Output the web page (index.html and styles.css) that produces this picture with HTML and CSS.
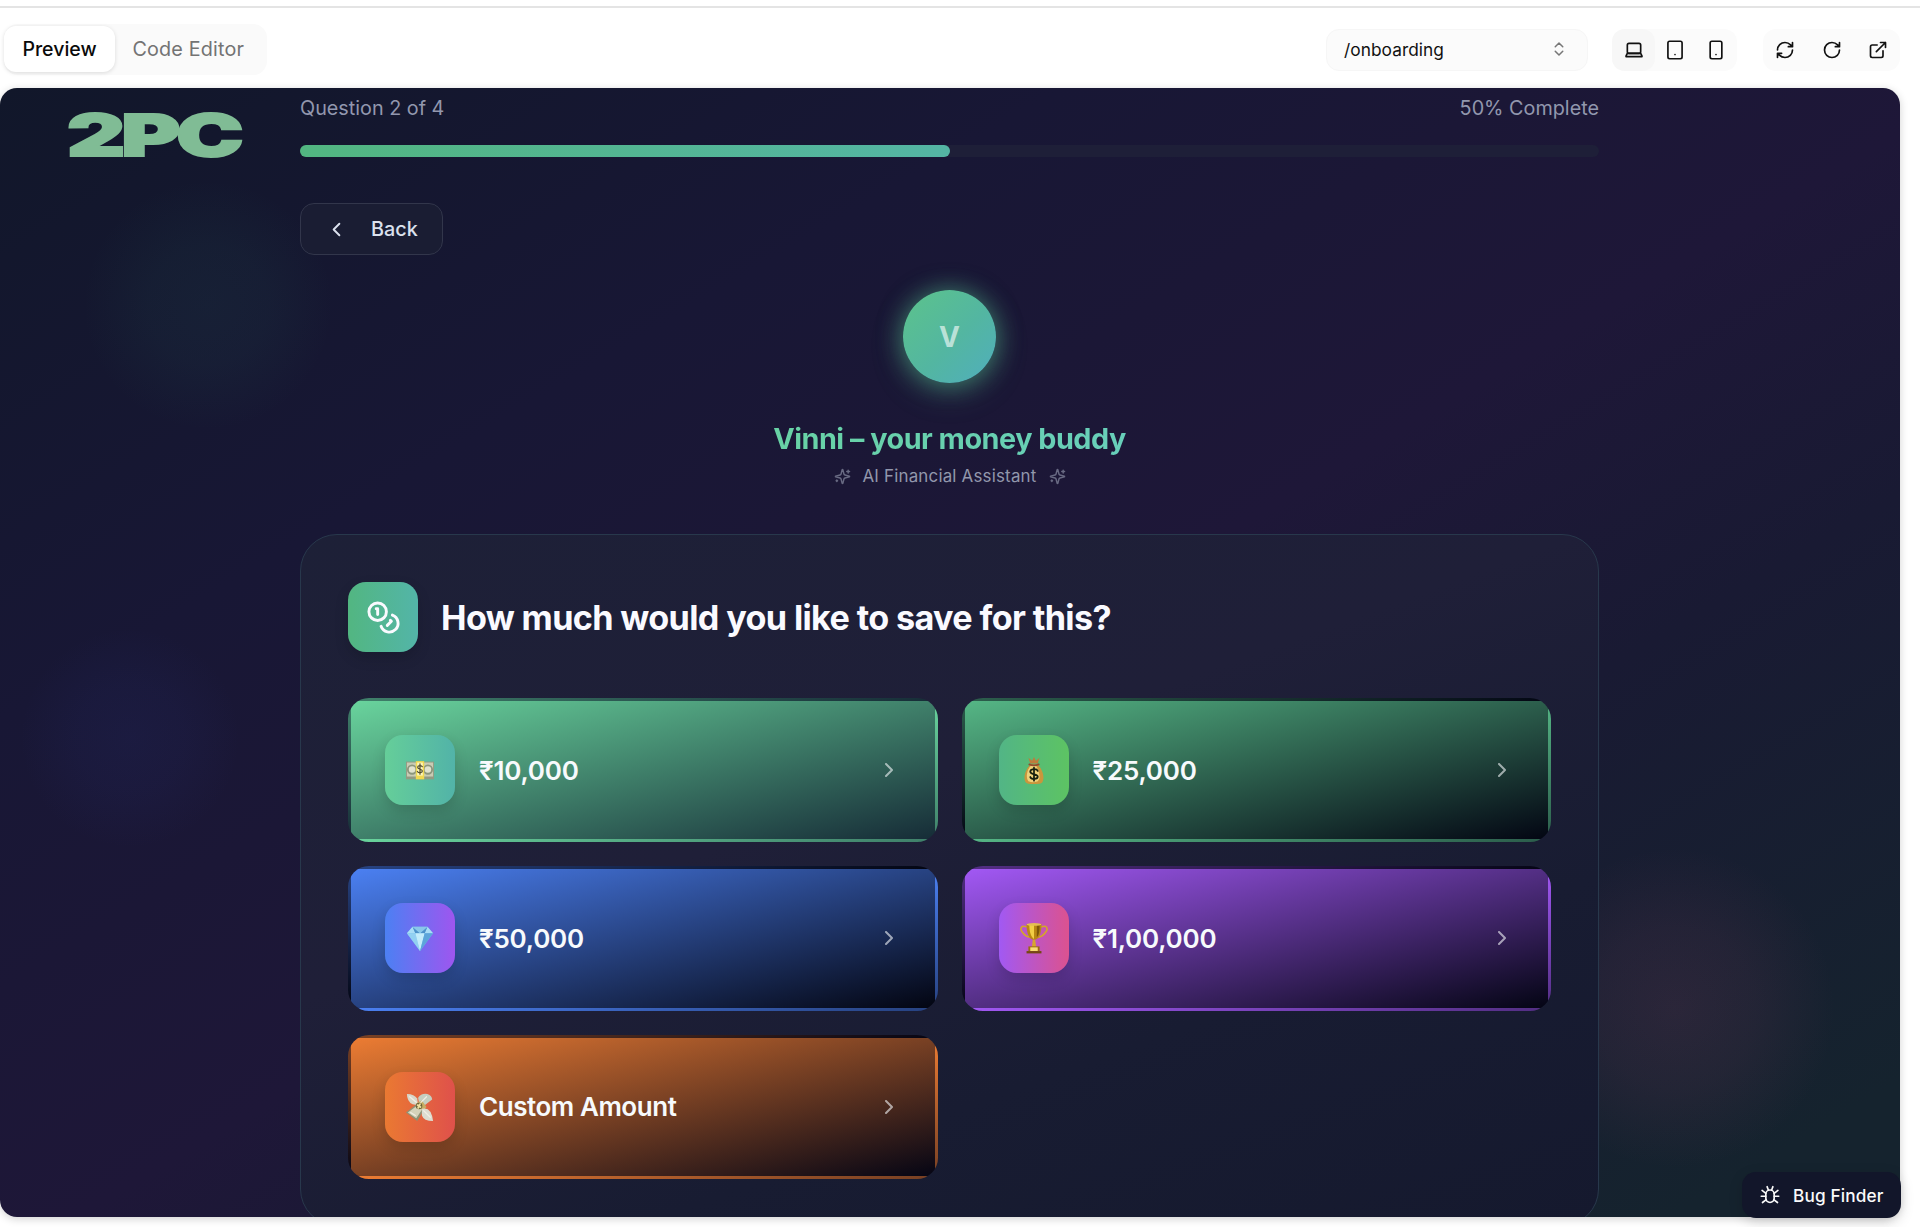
FILE: index.html
```html
<!DOCTYPE html>
<html lang="en">
<head>
<meta charset="utf-8">
<title>Onboarding preview</title>
<link rel="stylesheet" href="styles.css">
</head>
<body>
<svg class="defs" width="0" height="0">
  <symbol id="chev" viewBox="0 0 24 24"><path d="m9 18 6-6-6-6"/></symbol>
  <symbol id="spark" viewBox="0 0 24 24"><path d="M9.937 15.5A2 2 0 0 0 8.5 14.063l-6.135-1.582a.5.5 0 0 1 0-.962L8.5 9.936A2 2 0 0 0 9.937 8.5l1.582-6.135a.5.5 0 0 1 .963 0L14.063 8.5A2 2 0 0 0 15.5 9.937l6.135 1.581a.5.5 0 0 1 0 .964L15.5 14.063a2 2 0 0 0-1.437 1.437l-1.582 6.135a.5.5 0 0 1-.963 0z"/><path d="M20 3v4M22 5h-4M4 17v2M5 18H3"/></symbol>
</svg>
<header class="toolbar">
  <div class="tabs"><button class="tab active">Preview</button><button class="tab">Code Editor</button></div>
  <div class="tools">
    <div class="route"><span>/onboarding</span><svg viewBox="0 0 24 24"><path d="m7 15 5 5 5-5M7 9l5-5 5 5"/></svg></div>
    <div class="devices">
      <span class="device on"><svg viewBox="0 0 24 24"><rect x="4" y="4" width="16" height="12" rx="2"/><path d="M4 16l-1.500 3q-.4 1 .6 1h17.800q1 0 .6-1L20 16z"/></svg></span>
      <span class="device"><svg viewBox="0 0 24 24"><rect x="3.500" y="1.500" width="17" height="21" rx="2"/><path d="M12 17.500h.01"/></svg></span>
      <span class="device"><svg viewBox="0 0 24 24"><rect x="5" y="1.500" width="14" height="21" rx="2"/><path d="M12 17.500h.01"/></svg></span>
    </div>
    <div class="actions">
      <svg viewBox="0 0 24 24"><path d="M3 12a9 9 0 0 1 9-9 9.750 9.750 0 0 1 6.740 2.740L21 8M21 3v5h-5M21 12a9 9 0 0 1-9 9 9.750 9.750 0 0 1-6.740-2.740L3 16M8 16H3v5"/></svg>
      <svg viewBox="0 0 24 24"><path d="M21 12a9 9 0 1 1-9-9c2.520 0 4.930 1 6.740 2.740L21 8M21 3v5h-5"/></svg>
      <svg viewBox="0 0 24 24"><path d="M15 3h6v6M10 14 21 3M18 13v6a2 2 0 0 1-2 2H5a2 2 0 0 1-2-2V8a2 2 0 0 1 2-2h6"/></svg>
    </div>
  </div>
</header>
<main class="preview">
  <svg class="logo" viewBox="0 0 190 80"><text transform="translate(2 60) scale(1.550 1)">2PC</text></svg>
  <div class="column">
    <div class="status"><span>Question 2 of 4</span><span>50% Complete</span></div>
    <div class="progress"><div class="fill" style="width:50%"></div></div>
    <button class="back"><svg viewBox="0 0 24 24"><path d="m15 18-6-6 6-6"/></svg><span>Back</span></button>
    <section class="buddy">
      <div class="avatar">V</div>
      <h1>Vinni – your money buddy</h1>
      <p><svg><use href="#spark"/></svg><span>AI Financial Assistant</span><svg><use href="#spark"/></svg></p>
    </section>
    <section class="card">
      <div class="question">
        <div class="badge coins"><svg viewBox="0 0 24 24"><circle cx="8" cy="8" r="6"/><path d="M18.090 10.370A6 6 0 1 1 10.340 18M7 6h1v4M16.710 13.880l.7.710-2.820 2.820"/></svg></div>
        <h2>How much would you like to save for this?</h2>
      </div>
      <div class="options">
        <button class="option mint"><span class="badge"><svg viewBox="0 0 30 30"><rect x="0" y="6" width="30" height="19" fill="#929a82"/><path d="M1 7h28v15H1z" fill="#c9cbb4"/><circle cx="6.500" cy="14.500" r="4.500" fill="#e1e2cf" stroke="#8c967d"/><circle cx="23.500" cy="14.500" r="4.500" fill="#e1e2cf" stroke="#8c967d"/><path d="M10.500 5.500h9V25h-9z" fill="#f1d951"/><path d="M12 7h6v14h-6z" fill="#fff6ba"/><path d="M17.500 11.500c-1-2-5-1.500-5 .6 0 2.700 5 1.500 5 4 0 2.200-4 2.500-5.300.5M15 8.500v11" fill="none" stroke="#4f4a2f" stroke-width="1.300"/></svg></span><b>₹10,000</b><svg class="next"><use href="#chev"/></svg></button>
        <button class="option green"><span class="badge"><svg viewBox="0 0 30 30"><path d="M11 9C6 14 3 23 6 28q1 2 9 2t9-2c3-5 0-14-5-19z" fill="#c9963c"/><path d="M12 10C7 15 6 24 9 27q5 2 10 0c4-3 1-12-2-17z" fill="#efd27b"/><path d="M11 8 9 2l4 3 2-4 2 4 4-3-2 6z" fill="#bf7b3b"/><path d="M10 9q5 2 10 0" fill="none" stroke="#934b2e" stroke-width="2"/><path d="M19 16c-1-3-8-2.500-8 1 0 3.500 8 1.700 8 5s-7 3.500-8 .5M15 12.500v14" fill="none" stroke="#17210f" stroke-width="1.900"/></svg></span><b>₹25,000</b><svg class="next"><use href="#chev"/></svg></button>
        <button class="option blue"><span class="badge"><svg viewBox="0 0 30 30"><path d="M7 3h16l6 7-14 19L1 10z" fill="#72bce9"/><path d="m7 3 3 7H1zM23 3l-3 7h9z" fill="#a9ddf7"/><path d="m7 3 8 7H10zM23 3l-8 7h5z" fill="#4d91c9"/><path d="M7 3h16l-8 7z" fill="#8ac7ea"/><path d="M1 10h9l5 19z" fill="#92d0f2"/><path d="M10 10h10l-5 19z" fill="#c3ecfb"/><path d="M20 10h9L15 29z" fill="#5ca5da"/></svg></span><b>₹50,000</b><svg class="next"><use href="#chev"/></svg></button>
        <button class="option purple"><span class="badge"><svg viewBox="0 0 30 34"><path d="M7 5C1 3 0 7 2 10s5 6 9 6M23 5c6-2 7 2 5 5s-5 6-9 6" fill="none" stroke="#d5a52b" stroke-width="1.800"/><path d="M7 2h16c0 11-3 17-8 17S7 13 7 2z" fill="#b88714"/><path d="M10 3h5v15c-3-2-5-7-5-15z" fill="#f1ce45"/><path d="M18 3h3c0 8-1 11-3 13z" fill="#7e5608"/><ellipse cx="15" cy="2.500" rx="8" ry="1.500" fill="#e4bf50"/><path d="M13.700 19h2.600l1 8h-4.600z" fill="#d7a52c"/><path d="M9 26h12v5H9z" fill="#9b6a13"/><path d="M11 27h8v4h-8z" fill="#f8dc74"/><path d="M7 31h16v2.500H7z" fill="#754712"/></svg></span><b>₹1,00,000</b><svg class="next"><use href="#chev"/></svg></button>
        <button class="option orange"><span class="badge"><svg viewBox="0 0 30 30"><path d="M1 1q8 0 11 5l1 7-6-1Q1 9 1 1z" fill="#d8d7c9"/><path d="M13 5q3-5 10-4 5 2 5 6l-8 6-6-2z" fill="#c5cec0"/><path d="m14 10 7 5-9 15L0 21z" fill="#8e9275"/><path d="m14 12 5 3-8 12-9-6z" fill="#d5d3bb"/><path d="m11 11 6-3 5 7-4 4z" fill="#c7ae64"/><path d="M17 17q10-3 12 13-10 0-12-6z" fill="#dddcd0"/><circle cx="14" cy="14" r="3.500" fill="#6d653b"/><path d="m4 4 7 6M22 4l-6 6M19 19l7 7M5 21l5 3" stroke="#f1eee4" stroke-width="1.300"/><path d="m12.500 13 3 2M13 16l2-4" stroke="#efe0a0"/></svg></span><b>Custom Amount</b><svg class="next"><use href="#chev"/></svg></button>
      </div>
    </section>
  </div>
</main>
<button class="bug"><svg viewBox="0 0 24 24"><rect x="7" y="6" width="10" height="15" rx="5"/><path d="m8.500 2 1.500 4M15.500 2 14 6M7 10 2.500 6.500M17 10l4.500-3.500M7 13.500H1.500M17 13.500h5.500M7.500 17.500 3 21M16.500 17.500 21 21"/></svg><span>Bug Finder</span></button>
</body>
</html>
```
FILE: styles.css
```css
* { box-sizing: border-box; }
body { margin: 0; width: 1920px; height: 1227px; overflow: hidden; position: relative; background: #fff; font-family: Inter, "Liberation Sans", sans-serif; }
button { font: inherit; border: 0; background: none; margin: 0; padding: 0; }
svg { fill: none; stroke: currentColor; stroke-width: 2; stroke-linecap: round; stroke-linejoin: round; flex: none; }
.defs { display: none; }
.badge svg { stroke: none; }

.toolbar { height: 88px; padding: 18px 20px 0 4px; display: flex; justify-content: space-between; align-items: flex-start; box-shadow: inset 0 6px #fff, inset 0 8px #e4e4e4; }
.tabs { margin-top: 6px; height: 51px; width: 263px; padding: 2px 0; display: flex; background: #fafafa; border-radius: 14px; }
.tab { font-size: 19.800px; color: #737373; font-weight: 400; padding: 0 17.500px; height: 46px; border-radius: 12px; white-space: nowrap; letter-spacing: .15px; }
.tab.active { width: 111px; font-size: 19.500px; font-weight: 500; letter-spacing: 0; background: #fff; color: #0a0a0a; box-shadow: 0 1px 4px rgba(0,0,0,.13); }
.tools { margin-top: 11px; display: flex; color: #111; }
.tools > div { height: 42px; display: flex; align-items: center; background: #fbfbfb; border-radius: 13px; }
.tools .route { width: 262px; padding: 0 19px 2px 17px; justify-content: space-between; border: 1px solid #f6f6f6; font-size: 17.300px; font-weight: 400; letter-spacing: .05px; }
.route svg { width: 18px; height: 18px; color: #777; }
.tools .devices { margin-left: 24px; width: 125px; }
.device { width: 40.500px; height: 42px; display: grid; place-items: center; border-radius: 13px; }
.device.on { width: 43px; background: #f7f7f7; }
.device svg { width: 20px; height: 20px; }
.tools .actions { margin-left: 26px; width: 137px; padding: 0 12px; justify-content: space-between; }
.actions svg { width: 20px; height: 20px; }

.preview { position: relative; width: 1900px; height: 1129px; overflow: hidden; border-radius: 17px; padding: 8px 0 0 300px;
  background: radial-gradient(circle at 208px 217px, rgba(52,150,125,.07), rgba(52,150,125,.055) 60px, transparent 125px),
    radial-gradient(circle at 130px 650px, rgba(55,75,190,.08), rgba(55,75,190,.055) 55px, transparent 110px),
    radial-gradient(circle at 1675px 920px, rgba(190,80,125,.12), rgba(190,80,125,.08) 80px, transparent 160px),
    linear-gradient(to bottom right, #11172a 0%, #181735 28%, #1b1736 40%, #1e1738 52%, #191a33 68%, #15232e 94%, #15232e 100%);
  box-shadow: 0 2px 8px rgba(0,0,0,.18); }
.logo { position: absolute; left: 65px; top: 8px; width: 190px; height: 80px; overflow: visible; }
.logo text { font: 900 58px Inter, sans-serif; letter-spacing: -2.500px; fill: #80bc95; stroke: #80bc95; stroke-width: 2px; stroke-linejoin: miter; }
.column { width: 1299px; }
.status { display: flex; justify-content: space-between; font-size: 19.800px; line-height: 24px; color: #9297ae; }
.progress { margin-top: 25px; height: 12px; border-radius: 6px; background: #1e1f38; }
.fill { height: 12px; border-radius: 6px; background: linear-gradient(90deg, #52b681, #54b5a4); }
.back { margin-top: 46px; width: 143px; height: 52px; border: 1px solid #32364b; border-radius: 14px; background: #1a1d33; display: flex; align-items: center; gap: 23px; padding-left: 24px; color: #dbe1ee; font-size: 19.800px; font-weight: 500; }
.back svg { width: 23px; height: 23px; }
.buddy { display: flex; flex-direction: column; align-items: center; margin-top: 35px; }
.avatar { width: 93px; height: 93px; border-radius: 50%; display: grid; place-items: center; background: linear-gradient(135deg, #5cc38b, #53b6a1 55%, #50aebd); color: rgba(255,255,255,.62); font-size: 28px; font-weight: 700; box-shadow: 0 0 24px rgba(82,183,136,.55), 0 9px 32px rgba(82,183,136,.3); }
.buddy h1 { margin: 38px 0 0; font-size: 28.800px; line-height: 36px; letter-spacing: -.5px; font-weight: 700; background: linear-gradient(90deg, #68d2a5, #68cfba); background-clip: text; color: transparent; white-space: nowrap; }
.buddy p { margin: 7px 0 0; display: flex; align-items: center; gap: 12px; font-size: 16.900px; line-height: 24px; color: #9297ac; letter-spacing: .2px; }
.buddy p svg { width: 17px; height: 17px; opacity: .65; }

.card { margin-top: 46px; height: 692px; border: 1px solid #28384c; border-radius: 37px; padding: 47px; background: linear-gradient(160deg, #1d2037 0%, #1f1f38 40%, #181c32 70%, #15192e 100%); }
.question { display: flex; align-items: center; gap: 23px; height: 70px; color: #fafaff; }
.question h2 { margin: 0; font-size: 34.200px; font-weight: 650; letter-spacing: -.65px; white-space: nowrap; }
.badge { width: 70px; height: 70px; flex: none; border-radius: 18px; display: grid; place-items: center; box-shadow: 0 6px 14px rgba(0,0,0,.15); }
.badge svg { width: 28px; height: 28px; }
.coins { background: linear-gradient(90deg, #52b681, #53b5a8); }
.badge.coins svg { width: 35px; height: 35px; stroke: currentColor; }
.options { margin-top: 46px; display: grid; grid-template-columns: 1fr 1fr; gap: 24px; }
.option { height: 144.300px; border: 3px solid transparent; border-radius: 21px; padding: 0 34px; display: flex; align-items: center; color: #f7fafc; text-align: left; }
.option b { margin-left: 24px; font-size: 26px; font-weight: 560; letter-spacing: -.2px; }
.orange b { letter-spacing: -.45px; }
.next { width: 24px; height: 24px; margin-left: auto; opacity: .6; }
.mint { background-image: linear-gradient(to bottom right, #69d49d, #162c37); }
.green { background-image: linear-gradient(to bottom right, #55b685, #030613); }
.blue { background-image: linear-gradient(to bottom right, #4b80f2, #030511); }
.purple { background-image: linear-gradient(to bottom right, #a258f4, #040514); }
.orange { background-image: linear-gradient(to bottom right, #ec7c33, #050514); }
.mint .badge { background: linear-gradient(90deg, #65ce99, #52b3a8); }
.green .badge { background: linear-gradient(90deg, #52b586, #5dc363); }
.blue .badge { background: linear-gradient(90deg, #4c80f3, #9e56ef); }
.purple .badge { background: linear-gradient(90deg, #a159f3, #dc528f); }
.purple .badge svg { height: 32px; }
.orange .badge { background: linear-gradient(90deg, #ea7932, #df514b); }
.bug { position: absolute; left: 1742px; top: 1172px; width: 159px; height: 46px; border-radius: 14px; background: #12162a; color: #fafafa; display: flex; align-items: center; gap: 13px; padding-left: 18px; font-size: 17.200px; font-weight: 500; letter-spacing: .15px; box-shadow: 0 4px 14px rgba(0,0,0,.15); }
.bug svg { width: 20px; height: 20px; }
```
